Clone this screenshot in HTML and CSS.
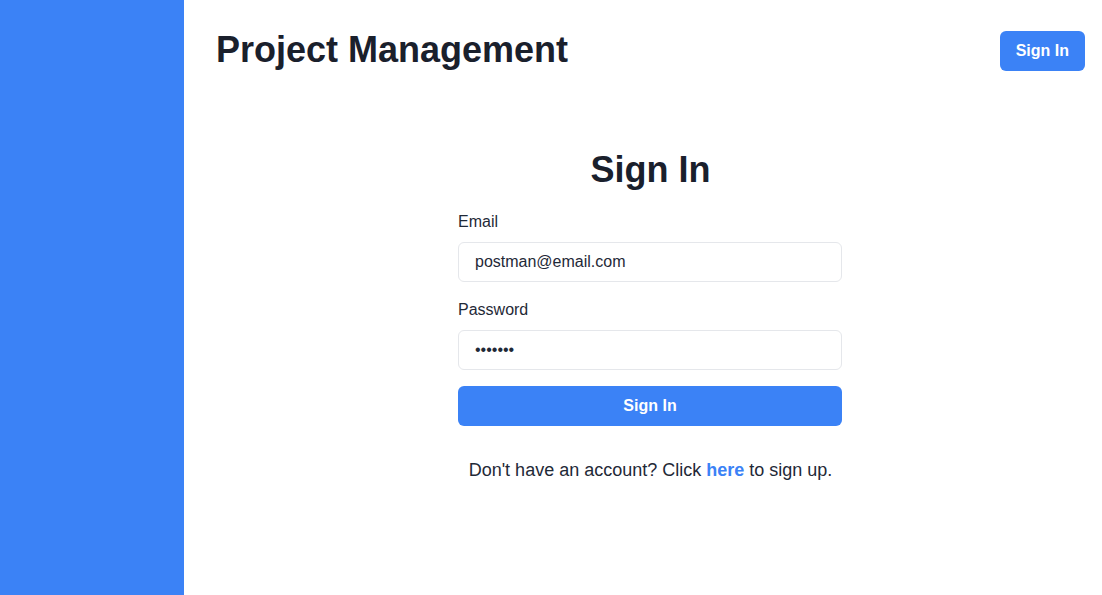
FILE: index.html
```html
<!DOCTYPE html>
<html lang="en">
<head>
<meta charset="utf-8">
<title>Project Management</title>
<link rel="stylesheet" href="styles.css">
</head>
<body>
<div class="app">
  <aside class="sidebar"></aside>
  <main class="main">
    <header class="header">
      <h1 class="title">Project Management</h1>
      <button class="btn btn-header" type="button">Sign In</button>
    </header>
    <section class="auth">
      <h2 class="auth-title">Sign In</h2>
      <form class="form">
        <label class="label" for="email">Email</label>
        <input class="input" id="email" type="email" value="postman@email.com">
        <label class="label label-gap" for="password">Password</label>
        <input class="input" id="password" type="password" value="1234567">
        <button class="btn btn-block" type="button">Sign In</button>
      </form>
      <p class="signup">Don't have an account? Click <a class="link" href="#">here</a> to sign up.</p>
    </section>
  </main>
</div>
</body>
</html>
```

FILE: styles.css
```css
* { box-sizing: border-box; }
html, body { margin: 0; height: 100%; }
body {
  font-family: "Liberation Sans", Arial, sans-serif;
  color: #1f2937;
  background: #ffffff;
}
.app { display: flex; height: 100vh; }
.sidebar { width: 184px; flex-shrink: 0; background: #3b82f6; }
.main { flex: 1; display: flex; flex-direction: column; padding: 0 18px 0 32px; }
.header {
  display: flex;
  justify-content: space-between;
  align-items: flex-start;
  padding-top: 30px;
}
.title {
  margin: 0;
  font-size: 36px;
  line-height: 40px;
  font-weight: 700;
  color: #1a202c;
}
.btn {
  font-family: inherit;
  font-weight: 700;
  font-size: 16px;
  color: #ffffff;
  background: #3b82f6;
  border: none;
  border-radius: 6px;
  height: 40px;
  padding: 0 16px;
  cursor: pointer;
}
.btn-header { margin-top: 1px; margin-right: -1px; }
.auth {
  width: 384px;
  margin: 79px auto 0;
  display: flex;
  flex-direction: column;
}
.auth-title {
  margin: 0;
  font-size: 36px;
  line-height: 40px;
  font-weight: 700;
  text-align: center;
  color: #1a202c;
  padding-left: 1px;
}
.form { display: flex; flex-direction: column; margin-top: 20px; }
.label { font-size: 16px; line-height: 24px; margin-bottom: 8px; }
.label-gap { margin-top: 16px; }
.input {
  height: 40px;
  border: 1px solid #e5e7eb;
  border-radius: 6px;
  padding: 0 16px;
  font-family: inherit;
  font-size: 16px;
  color: #1f2937;
  outline: none;
}
.btn-block { margin-top: 16px; width: 100%; }
.signup {
  margin: 32px 0 0;
  text-align: center;
  font-size: 18px;
  line-height: 24px;
  padding-left: 1px;
}
.link { color: #3b82f6; font-weight: 700; text-decoration: none; }
```
